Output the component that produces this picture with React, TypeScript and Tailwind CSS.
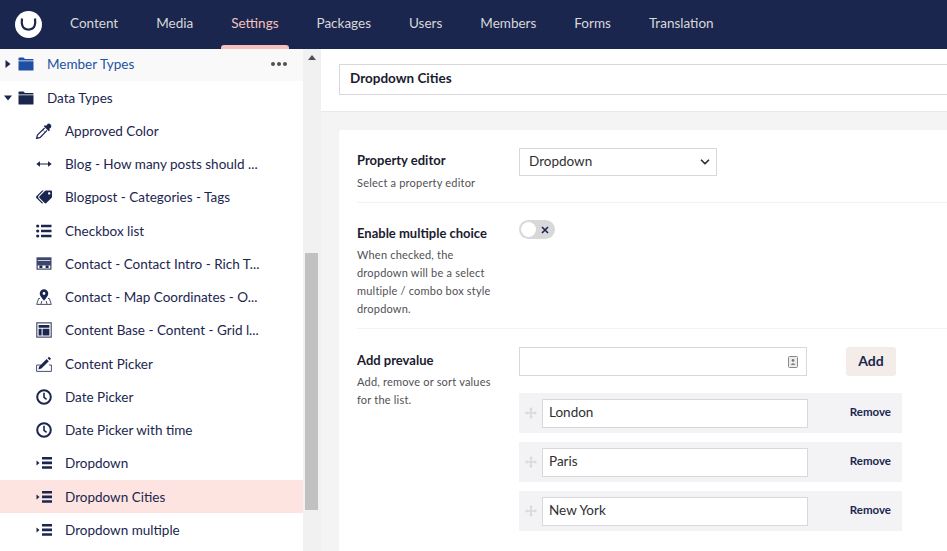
import { ChevronDown } from "lucide-react";
import { FaTags } from "react-icons/fa";

const NAV_ITEMS = ["Content", "Media", "Settings", "Packages", "Users", "Members", "Forms", "Translation"];

function Folder({ color }: { color: string }) {
  return (
    <svg width="16" height="14" viewBox="0 0 16 14" fill={color}>
      <path d="M0.5 1.5 Q0.5 0.5 1.5 0.5 H5.5 L7 2 H15 Q15.5 2 15.5 3 V3.5 H0.5 Z" />
      <path d="M0.5 4.3 H15.5 V13 Q15.5 13.5 15 13.5 H1 Q0.5 13.5 0.5 13 Z" />
    </svg>
  );
}

function Dropper() {
  return (
    <svg width="16" height="16" viewBox="0 0 16 16" fill="none" stroke="#1b264f">
      <path d="M10 3 L11.6 1 Q13 0 14.6 1.4 Q16 3 15 4.4 L13.2 6 L14 7 L12.8 8.2 L7.8 3.2 L9 2 Z" fill="#1b264f" stroke="none" />
      <path d="M8.6 5 L1.8 11.6 Q1.2 12.4 1.2 13.2 L0.6 15.4 L2.8 14.8 Q3.6 14.8 4.4 14.2 L11 7.4" strokeWidth="1.2" />
      <path d="M7 7.2 L9 9.2" strokeWidth="1" opacity="0.5" />
    </svg>
  );
}

function Resize() {
  return (
    <svg width="16" height="16" viewBox="0 0 16 16" fill="#1b264f">
      <path d="M0.3 8 L4 5.2 V7.4 H12 V5.2 L15.7 8 L12 10.8 V8.6 H4 V10.8 Z" />
    </svg>
  );
}

function ListIcon() {
  return (
    <svg width="16" height="14" viewBox="0 0 16 14" fill="#1b264f">
      <circle cx="1.7" cy="2" r="1.6" />
      <circle cx="1.7" cy="7" r="1.6" />
      <circle cx="1.7" cy="12" r="1.6" />
      <path d="M5 0.7 H15.5 V3.3 H5 Z M5 5.7 H15.5 V8.3 H5 Z M5 10.7 H15.5 V13.3 H5 Z" />
    </svg>
  );
}

function Newspaper() {
  return (
    <svg width="16" height="13" viewBox="0 0 16 13" fill="#3d466b">
      <path d="M0.5 0.3 H15.5 V12.7 H0.5 Z" />
      <path d="M1.7 3 H14.3 V3.8 H1.7 Z M1.7 8.4 H14.3 V11.6 H1.7 Z" fill="#fff" />
      <path d="M3.4 8.4 H6.4 V11 H3.4 Z M9.6 8.4 H12.6 V11 H9.6 Z" fill="#1b264f" />
    </svg>
  );
}

function MapPin() {
  return (
    <svg width="16" height="16" viewBox="0 0 16 16">
      <path fillRule="evenodd" fill="#1b264f" d="M8 0.2 A4.3 4.3 0 0 1 12.3 4.5 C12.3 7 9.4 9.8 8 11.8 C6.6 9.8 3.7 7 3.7 4.5 A4.3 4.3 0 0 1 8 0.2 Z M8 3.1 A1.4 1.4 0 1 0 8 5.9 A1.4 1.4 0 1 0 8 3.1 Z" />
      <path d="M4 9.5 L2.6 9.5 L0.7 15.4 H15.3 L13.4 9.5 H12 M5 15 L5.8 12 M11 15 L10.2 12" fill="none" stroke="#4a5273" strokeWidth="1" />
    </svg>
  );
}

function GridLayout() {
  return (
    <svg width="16" height="16" viewBox="0 0 16 16">
      <path fillRule="evenodd" fill="#4a5273" d="M0.2 0.2 H15.8 V15.8 H0.2 Z M1.4 1.4 V14.6 H14.6 V1.4 Z" />
      <path fill="#1b264f" d="M2.6 3 H13.4 V5.8 H2.6 Z M2.6 6.8 H5.6 V13.4 H2.6 Z M6.6 6.8 H13.4 V13.4 H6.6 Z" />
    </svg>
  );
}

function PenBox() {
  return (
    <svg width="16" height="16" viewBox="0 0 16 16" fill="none">
      <path d="M5 9 H0.6 V15.4 H15.4 V9 H13" stroke="#4a5273" strokeWidth="1" />
      <path d="M2.4 13.6 L3.2 10.4 L10.6 3 L12.8 5.2 L5.4 12.6 Z" fill="#1b264f" />
      <path d="M11.6 2.2 L13 0.8 L15 2.8 L13.6 4.2 Z" fill="#1b264f" />
    </svg>
  );
}

function Clock() {
  return (
    <svg width="16" height="16" viewBox="0 0 16 16" fill="none" stroke="#1b264f">
      <circle cx="8" cy="8" r="6.8" strokeWidth="2" />
      <path d="M8 3.8 V8.4 L10.6 10.4" strokeWidth="1.6" />
    </svg>
  );
}

function DropdownIcon() {
  return (
    <svg width="16" height="14" viewBox="0 0 16 14" fill="#1b264f">
      <path d="M0.5 4.6 L3.5 7 L0.5 9.4 Z" />
      <path d="M6 1 H16 V3.6 H6 Z M6 5.6 H16 V8.2 H6 Z M6 10.2 H16 V12.8 H6 Z" />
    </svg>
  );
}

const TREE_ITEMS = [
  { label: "Approved Color", icon: <Dropper /> },
  { label: "Blog - How many posts should ...", icon: <Resize /> },
  { label: "Blogpost - Categories - Tags", icon: <FaTags size={16} color="#1b264f" className="-scale-x-100" /> },
  { label: "Checkbox list", icon: <ListIcon /> },
  { label: "Contact - Contact Intro - Rich T...", icon: <Newspaper /> },
  { label: "Contact - Map Coordinates - O...", icon: <MapPin /> },
  { label: "Content Base - Content - Grid l...", icon: <GridLayout /> },
  { label: "Content Picker", icon: <PenBox /> },
  { label: "Date Picker", icon: <Clock /> },
  { label: "Date Picker with time", icon: <Clock /> },
  { label: "Dropdown", icon: <DropdownIcon /> },
  { label: "Dropdown Cities", icon: <DropdownIcon />, active: true },
  { label: "Dropdown multiple", icon: <DropdownIcon /> },
];

function DragHandle() {
  return (
    <svg width="12" height="12" viewBox="0 0 12 12" fill="#d9d9dc">
      <path d="M6 0 L8 2.4 H6.8 V5.2 H9.6 V4 L12 6 L9.6 8 V6.8 H6.8 V9.6 H8 L6 12 L4 9.6 H5.2 V6.8 H2.4 V8 L0 6 L2.4 4 V5.2 H5.2 V2.4 H4 Z" />
    </svg>
  );
}

function PrevalueRow({ value }: { value: string }) {
  return (
    <div className="flex h-[40px] w-[383px] items-center bg-[#f3f3f5]">
      <div className="flex w-[23px] justify-center pl-[1px]">
        <DragHandle />
      </div>
      <div className="flex h-[29px] w-[266px] items-center border border-[#d8d7d9] bg-white px-[6px] pb-[1px] text-[13.5px] text-[#303033]">
        {value}
      </div>
      <span className="ml-auto pb-[3px] pr-[11px] text-[11.5px] font-bold text-[#1b264f]">Remove</span>
    </div>
  );
}

export default function App() {
  return (
    <div className="flex h-[551px] w-[947px] flex-col overflow-hidden bg-white font-['Lato','Open_Sans',sans-serif] text-[#1b264f]">
      <header className="flex h-[49px] shrink-0 items-center bg-[#1b264f]">
        <div className="flex w-[70px] justify-center pr-[14px]">
          <div className="flex h-[27px] w-[27px] items-center justify-center rounded-full bg-white">
            <svg width="17" height="15" viewBox="0 0 17 15" fill="none" stroke="#1b264f" strokeWidth="2.2">
              <path d="M2 1.5 C1.4 6 1.4 12.6 8.5 12.6 C15.6 12.6 15.6 6 15 1.5" />
            </svg>
          </div>
        </div>
        <nav className="flex h-full gap-[38px]">
          {NAV_ITEMS.map((item) =>
            item === "Settings" ? (
              <div key={item} className="relative flex h-full items-center pb-[3px] text-[13.5px] text-[#f5c1bc]">
                {item}
                <div className="absolute bottom-0 left-[-10px] right-[-10px] h-[4px] rounded-t-[3px] bg-[#f5c1bc]" />
              </div>
            ) : (
              <div key={item} className="flex h-full items-center pb-[3px] text-[13.5px] text-[#d8d7d9]">
                {item}
              </div>
            ),
          )}
        </nav>
      </header>

      <div className="flex min-h-0 flex-1">
        <aside className="flex w-[303px] shrink-0 flex-col overflow-hidden">
          <div className="mt-[-1.2px] flex h-[33.25px] shrink-0 items-center bg-[#f9f9f9] pl-[5px] pr-[16px] text-[13.5px] text-[#2152a3]">
            <svg width="6" height="8" viewBox="0 0 6 8" fill="#1b264f">
              <path d="M0.5 0 L5.5 4 L0.5 8 Z" />
            </svg>
            <span className="ml-[7px]">
              <Folder color="#1f4fa3" />
            </span>
            <span className="ml-[13px]">Member Types</span>
            <span className="ml-auto flex gap-[2px]">
              <i className="h-[4px] w-[4px] rounded-full bg-[#515054]" />
              <i className="h-[4px] w-[4px] rounded-full bg-[#515054]" />
              <i className="h-[4px] w-[4px] rounded-full bg-[#515054]" />
            </span>
          </div>
          <div className="flex h-[33.25px] shrink-0 items-center pl-[4px] text-[13.5px]">
            <svg width="8" height="6" viewBox="0 0 8 6" fill="#1b264f">
              <path d="M0 0.5 H8 L4 5.5 Z" />
            </svg>
            <span className="ml-[6px]">
              <Folder color="#1b264f" />
            </span>
            <span className="ml-[13px]">Data Types</span>
          </div>
          {TREE_ITEMS.map((item) => (
            <div
              key={item.label}
              className={
                item.active
                  ? "flex h-[33.25px] shrink-0 items-center bg-[#fee4e1] pl-[36px] text-[13.5px]"
                  : "flex h-[33.25px] shrink-0 items-center pl-[36px] text-[13.5px]"
              }
            >
              <span className="flex w-[16px] justify-center">{item.icon}</span>
              <span className="ml-[13px] whitespace-nowrap">{item.label}</span>
            </div>
          ))}
        </aside>

        <div className="flex w-[17px] shrink-0 flex-col items-center bg-[#f1f1f1] pt-[6px]">
          <svg width="8" height="5" viewBox="0 0 8 5" fill="#505050">
            <path d="M4 0 L8 5 H0 Z" />
          </svg>
          <div className="mt-[193px] h-[257px] w-[13px] bg-[#c1c1c1]" />
        </div>

        <main className="flex min-w-0 flex-1 flex-col overflow-hidden border-l border-[#f0f0f0] bg-[#f4f4f5]">
          <div className="h-[63px] shrink-0 border-b border-[#e9e9eb] bg-white pl-[18px] pt-[15px]">
            <div className="flex h-[31px] w-[700px] items-center border border-[#d8d7d9] bg-white pb-[3px] pl-[10px] text-[13.5px] font-bold text-[#1b1b2f]">
              Dropdown Cities
            </div>
          </div>

          <div className="ml-[18px] mt-[18px] w-[700px] flex-1 rounded-tl-[3px] bg-white pl-[18px] pt-[18px]">
            <section className="flex h-[55px] border-b border-[#f3f3f5]">
              <div className="w-[162px]">
                <div className="pt-[2px] text-[13px] font-bold leading-[20px] text-[#1b1b2f]">Property editor</div>
                <div className="mt-[4px] text-[11px] leading-[18px] tracking-[0.2px] text-[#515054]">Select a property editor</div>
              </div>
              <div className="flex h-[28px] w-[198px] items-center justify-between border border-[#d8d7d9] pb-[1px] pl-[9px] pr-[4px] text-[13.5px] text-[#303033]">
                Dropdown
                <ChevronDown size={14} strokeWidth={3} color="#303033" className="mt-[1px]" />
              </div>
            </section>

            <section className="flex h-[126px] border-b border-[#f3f3f5] pt-[17px]">
              <div className="w-[162px]">
                <div className="mt-[3px] text-[13px] font-bold leading-[20px] text-[#1b1b2f]">Enable multiple choice</div>
                <div className="w-[140px] pt-[3px] text-[11px] leading-[18px] tracking-[0.2px] text-[#515054]">
                  When checked, the dropdown will be a select multiple / combo box style dropdown.
                </div>
              </div>
              <div className="flex h-[19px] w-[36px] items-center justify-between rounded-full bg-[#d8d7d9] pl-[2px] pr-[6px]">
                <span className="h-[15px] w-[15px] rounded-full bg-white" />
                <svg width="8" height="8" viewBox="0 0 8 8" stroke="#1b264f" strokeWidth="1.6">
                  <path d="M1 1 L7 7 M7 1 L1 7" />
                </svg>
              </div>
            </section>

            <section className="flex pt-[18px]">
              <div className="w-[162px]">
                <div className="pt-[3px] text-[13px] font-bold leading-[20px] text-[#1b1b2f]">Add prevalue</div>
                <div className="w-[140px] pt-[3px] text-[11px] leading-[18px] tracking-[0.2px] text-[#515054]">
                  Add, remove or sort values for the list.
                </div>
              </div>
              <div>
                <div className="flex items-center">
                  <div className="flex h-[29px] w-[288px] items-center justify-end border border-[#d8d7d9] pr-[8px]">
                    <svg width="10" height="12" viewBox="0 0 10 12">
                      <rect x="0.5" y="0.5" width="9" height="11" rx="1" fill="#ececec" stroke="#8a8a8a" />
                      <circle cx="5" cy="4.4" r="1.3" fill="#777" />
                      <path d="M2.6 9 Q5 5.4 7.4 9 Z" fill="#777" />
                    </svg>
                  </div>
                  <div className="ml-[39px] flex h-[29px] w-[50px] items-center justify-center rounded-[3px] bg-[#f3ece8] pb-[2px] text-[14px] font-bold text-[#1b264f]">
                    Add
                  </div>
                </div>
                <div className="mt-[17px] flex flex-col gap-[9px]">
                  <PrevalueRow value="London" />
                  <PrevalueRow value="Paris" />
                  <PrevalueRow value="New York" />
                </div>
              </div>
            </section>
          </div>
        </main>
      </div>
    </div>
  );
}
